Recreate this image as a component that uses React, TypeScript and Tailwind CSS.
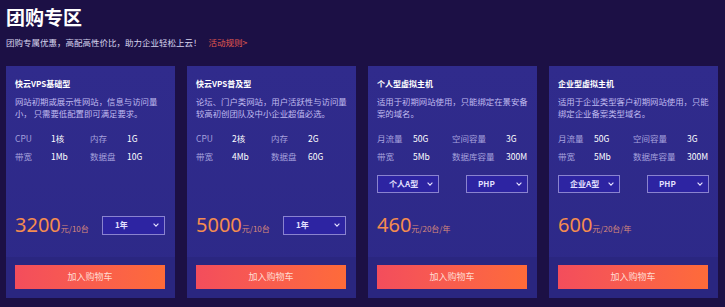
import React from "react";

type Spec = [string, string, string, string];

interface Card {
  title: string;
  desc: [string, string];
  specs: [Spec, Spec];
  wide: boolean;
  selects?: [string, string];
  price: string;
  unit: string;
  period?: string;
}

const cards: Card[] = [
  {
    title: "快云VPS基础型",
    desc: ["网站初期或展示性网站，信息与访问量", "小， 只需要低配置即可满足要求。"],
    specs: [
      ["CPU", "1核", "内存", "1G"],
      ["带宽", "1Mb", "数据盘", "10G"],
    ],
    wide: false,
    price: "3200",
    unit: "元/10台",
    period: "1年",
  },
  {
    title: "快云VPS普及型",
    desc: ["论坛、门户类网站，用户活跃性与访问量", "较高初创团队及中小企业超值必选。"],
    specs: [
      ["CPU", "2核", "内存", "2G"],
      ["带宽", "4Mb", "数据盘", "60G"],
    ],
    wide: false,
    price: "5000",
    unit: "元/10台",
    period: "1年",
  },
  {
    title: "个人型虚拟主机",
    desc: ["适用于初期网站使用，只能绑定在景安备", "案的域名。"],
    specs: [
      ["月流量", "50G", "空间容量", "3G"],
      ["带宽", "5Mb", "数据库容量", "300M"],
    ],
    wide: true,
    selects: ["个人A型", "PHP"],
    price: "460",
    unit: "元/20台/年",
  },
  {
    title: "企业型虚拟主机",
    desc: ["适用于企业类型客户初期网站使用，只能", "绑定企业备案类型域名。"],
    specs: [
      ["月流量", "50G", "空间容量", "3G"],
      ["带宽", "5Mb", "数据库容量", "300M"],
    ],
    wide: true,
    selects: ["企业A型", "PHP"],
    price: "600",
    unit: "元/20台/年",
  },
];

const Chevron = () => (
  <svg width="6" height="4" viewBox="0 0 6 4" className="shrink-0">
    <polyline points="0.6,0.6 3,3.1 5.4,0.6" fill="none" stroke="#e6e3ff" strokeWidth="1.1" />
  </svg>
);

function SelectBox({ label, className }: { label: string; className: string }) {
  return (
    <div
      className={
        "flex items-center justify-between border border-[#8a83cf] bg-[#2d24a2] text-[8px] font-bold text-[#e4e1ff] " +
        className
      }
    >
      <span>{label}</span>
      <Chevron />
    </div>
  );
}

function CardView({ c }: { c: Card }) {
  return (
    <div className="flex w-[169px] shrink-0 flex-col bg-gradient-to-b from-[#302b8c] to-[#2d2988]">
      <div className="flex h-[191px] flex-col px-[9px] pt-[12px]">
        <div className="text-[8px] font-bold leading-[11px] text-white">{c.title}</div>
        <div className="mt-[6px] whitespace-nowrap text-[8.4px] leading-[12px] text-[#c0bbf0]">
          {c.desc[0]}
          <br />
          {c.desc[1]}
        </div>
        <div
          className={
            "mt-[11px] grid text-[8.5px] leading-[17.5px] " +
            (c.wide ? "grid-cols-[36px_39px_54px_auto]" : "grid-cols-[36px_39px_37px_auto]")
          }
        >
          {c.specs.map((s, i) => (
            <React.Fragment key={i}>
              <span className="text-[#a6a1dd]">{s[0]}</span>
              <span className="text-white">{s[1]}</span>
              <span className="text-[#a6a1dd]">{s[2]}</span>
              <span className="text-white">{s[3]}</span>
            </React.Fragment>
          ))}
        </div>
        {c.selects && (
          <div className="mt-[10px] flex items-center justify-between">
            <SelectBox label={c.selects[0]} className="h-[18px] w-[62px] pl-[11px] pr-[5px]" />
            <SelectBox label={c.selects[1]} className="h-[18px] w-[62px] pl-[11px] pr-[5px]" />
          </div>
        )}
        <div className="mt-auto mb-[20px] flex h-[24px] items-center justify-between">
          <div className="flex items-baseline">
            <span className="font-['Noto_Sans',sans-serif] text-[20px] leading-[24px] text-[#f58c4f]">
              {c.price}
            </span>
            <span className="text-[8px] text-[#d88a7c]">{c.unit}</span>
          </div>
          {c.period && (
            <SelectBox label={c.period} className="mr-[1px] h-[19px] w-[63px] pl-[12px] pr-[5px]" />
          )}
        </div>
      </div>
      <div className="flex flex-1 flex-col bg-[#2a2680] px-[9px] pt-[8px] pb-[9px]">
        <button className="flex h-[24px] w-[150px] items-center justify-center bg-gradient-to-r from-[#f34d5c] to-[#fe6b39] text-[9px] text-[#ffdcd3]">
          加入购物车
        </button>
      </div>
    </div>
  );
}

export default function App() {
  return (
    <div className="h-[307px] w-[725px] overflow-hidden bg-[#1c1045] font-['Noto_Sans_CJK_SC','Noto_Sans',sans-serif]">
      <div className="px-[6px] pt-[7px]">
        <h1 className="text-[19px] font-bold leading-[19px] text-white">团购专区</h1>
        <p className="mt-[10px] text-[8.5px] leading-[12px] text-[#d7d4ee]">
          团购专属优惠，高配高性价比，助力企业轻松上云！
          <span className="ml-[7px] text-[#e55a4f]">活动规则&gt;</span>
        </p>
      </div>
      <div className="mt-[18px] flex gap-[12px] px-[6px]">
        {cards.map((c) => (
          <CardView key={c.title} c={c} />
        ))}
      </div>
    </div>
  );
}
